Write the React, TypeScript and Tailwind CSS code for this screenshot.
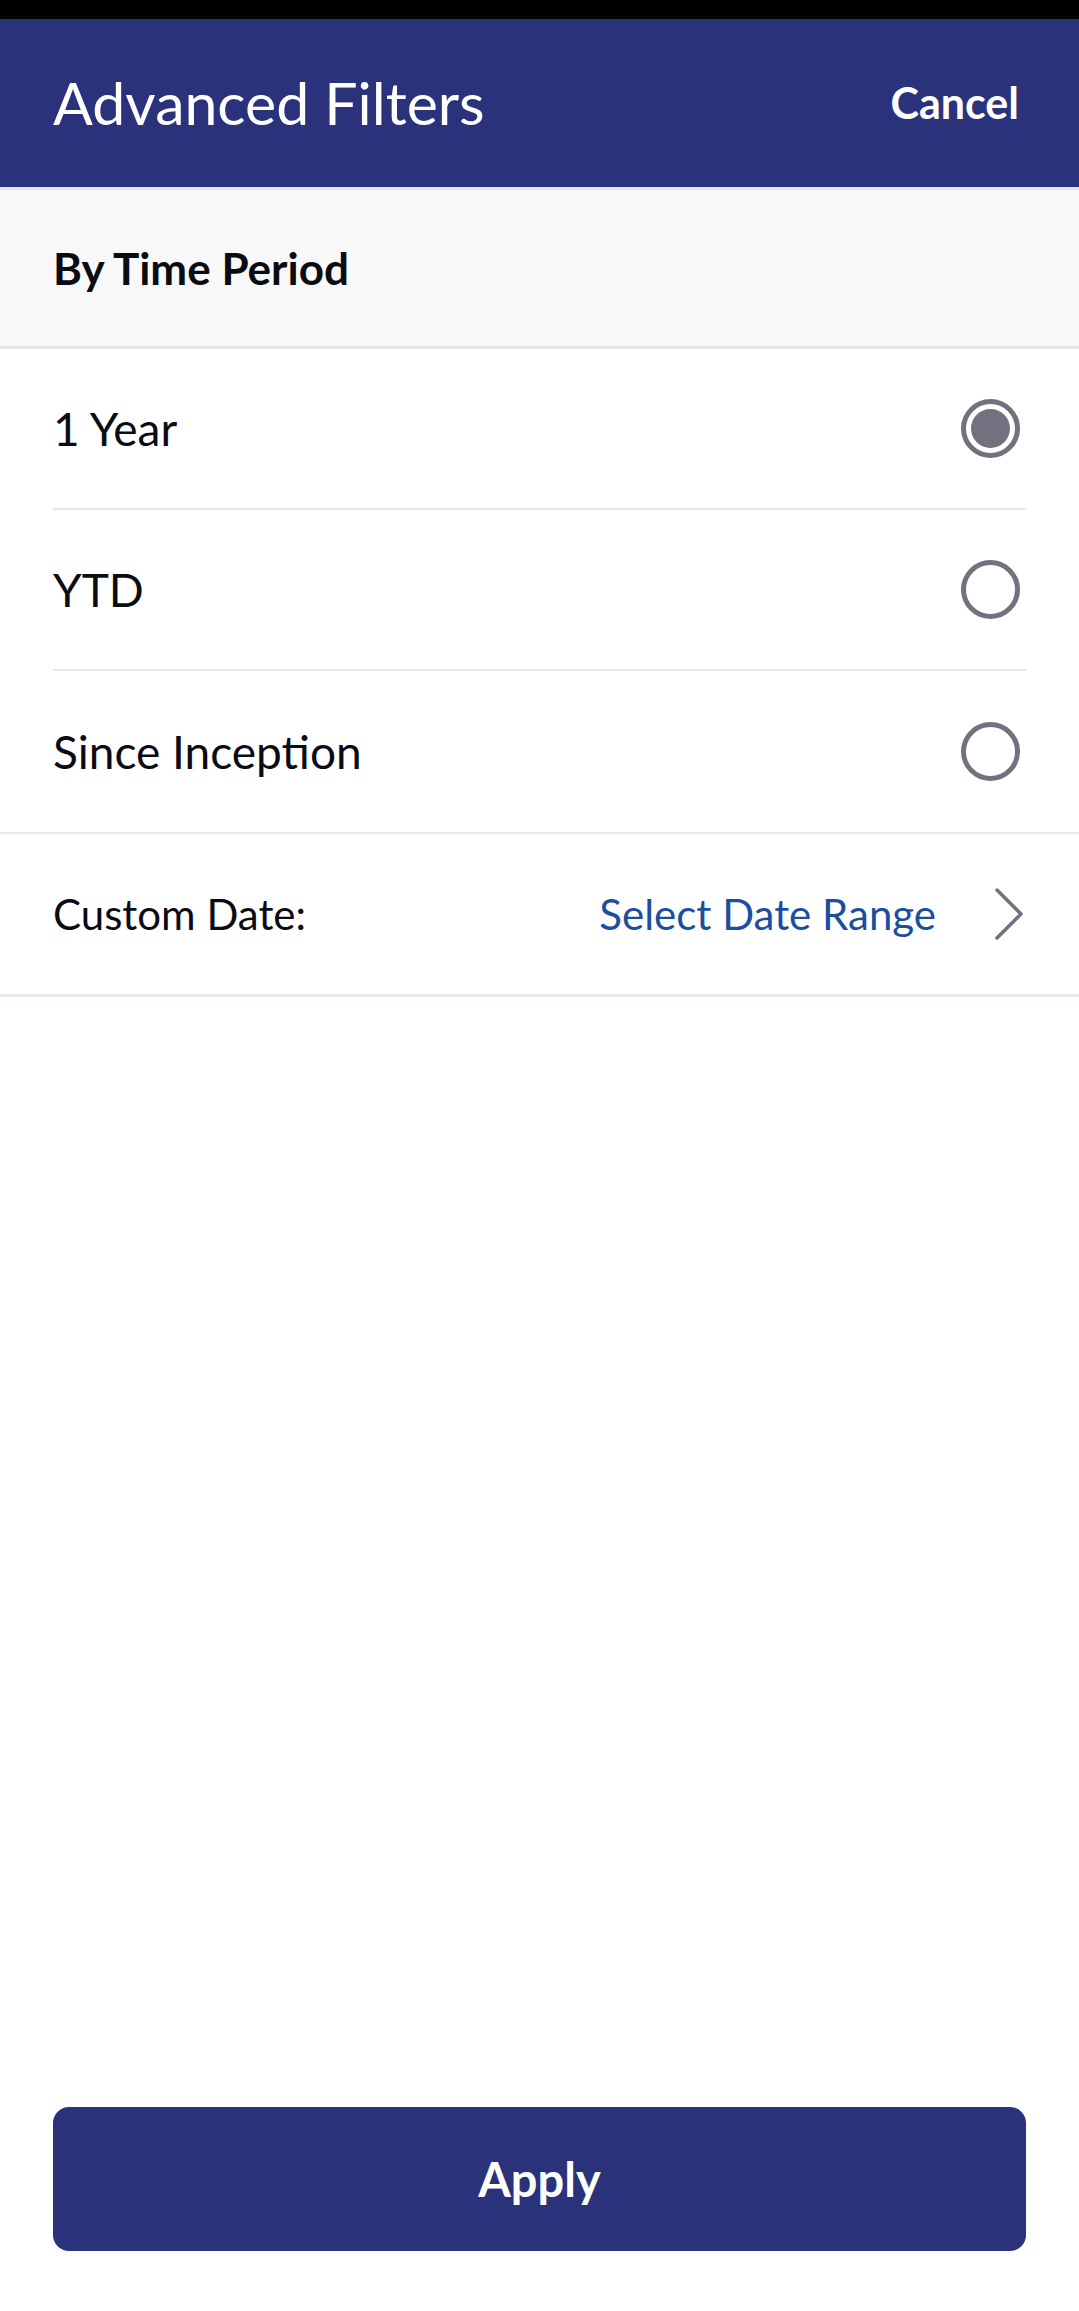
import React from "react";

const options = ["1 Year", "YTD", "Since Inception"];

function Radio({ checked }: { checked: boolean }) {
  return (
    <span className="flex h-[59px] w-[59px] items-center justify-center rounded-full border-[5px] border-[#71717f]">
      {checked && <span className="h-[39px] w-[39px] rounded-full bg-[#71717f]" />}
    </span>
  );
}

export default function App() {
  const selected = "1 Year";

  return (
    <div
      className="flex h-screen flex-col bg-white text-[#0b0b14]"
      style={{ fontFamily: "Lato, 'Noto Sans', sans-serif" }}
    >
      <div className="h-[19px] bg-black" />

      <header className="flex h-[171px] items-center justify-between border-b-[3px] border-[#dfe5ef] bg-[#29327a] pl-[53px] pr-[60px]">
        <h1 className="text-[59px] font-normal text-white">Advanced Filters</h1>
        <button className="text-[43px] font-bold text-white">Cancel</button>
      </header>

      <div className="flex h-[159px] items-center border-b-[3px] border-[#e6e6e6] bg-[#f8f8f8] px-[53px]">
        <span className="text-[44px] font-bold">By Time Period</span>
      </div>

      {options.map((opt, i) => (
        <div key={opt} className={i < options.length - 1 ? "" : "border-b-[2px] border-[#e8eaee]"}>
          <div
            className={
              "mx-[53px] flex h-[161px] items-center justify-between " +
              (i < options.length - 1 ? "border-b-[2px] border-[#e8e8e8]" : "")
            }
          >
            <span className="text-[46px]">{opt}</span>
            <span className="mr-[6px]">
              <Radio checked={opt === selected} />
            </span>
          </div>
        </div>
      ))}

      <div className="flex h-[163px] items-center justify-between border-b-[3px] border-[#e2e8f0] pl-[53px] pr-[55px]">
        <span className="text-[42px]">Custom Date:</span>
        <span className="flex items-center gap-[58px]">
          <span className="text-[42px] text-[#1b4f9e]">Select Date Range</span>
          <svg width="30" height="54" viewBox="0 0 30 54" fill="none">
            <path
              d="M3 3 L27 27 L3 51"
              stroke="#71717f"
              strokeWidth="3.5"
              strokeLinecap="round"
              strokeLinejoin="round"
            />
          </svg>
        </span>
      </div>

      <div className="flex-1" />

      <div className="px-[53px] pb-[60px]">
        <button className="flex h-[144px] w-full items-center justify-center rounded-[16px] bg-[#29327a] text-[47px] font-bold text-white">
          Apply
        </button>
      </div>
    </div>
  );
}
